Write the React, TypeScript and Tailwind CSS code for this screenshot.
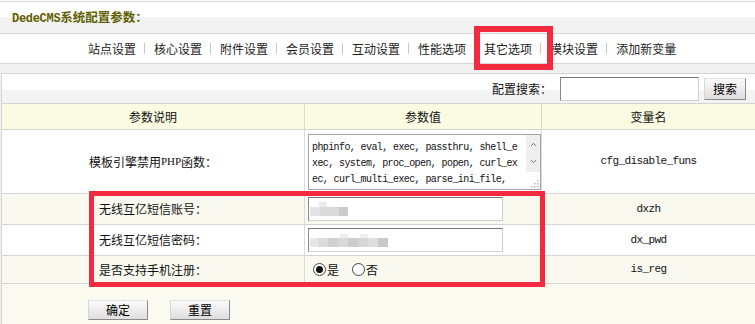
import { ChevronUp, ChevronDown } from "lucide-react";

const NAV = ["站点设置", "核心设置", "附件设置", "会员设置", "互动设置", "性能选项", "其它选项", "模块设置", "添加新变量"];
const ACTIVE = 6;

const mono = "font-['Liberation_Mono',monospace]";

function OldButton({ label, w }: { label: string; w: string }) {
  return (
    <button
      className={`${w} flex items-center justify-center border border-t-[#e4e4e4] border-l-[#d6d6d6] border-r-[#8a8a8a] border-b-[#8a8a8a] bg-[linear-gradient(to_bottom,#fbfbfb,#dedede)] text-[12px] text-black`}
    >
      {label}
    </button>
  );
}

function OldInput({ children, w }: { children?: React.ReactNode; w: string }) {
  return (
    <div className={`${w} flex h-[24px] items-center border border-t-[#777] border-l-[#8a8a8a] border-r-[#cfcfcf] border-b-[#cfcfcf] bg-white pl-px`}>
      {children}
    </div>
  );
}

function Radio({ checked }: { checked?: boolean }) {
  return (
    <span className="flex h-[13px] w-[13px] items-center justify-center rounded-full border border-[#444] bg-white">
      {checked && <span className="h-[7px] w-[7px] rounded-full bg-[#111]" />}
    </span>
  );
}

export default function App() {
  return (
    <div className="relative h-[324px] w-[755px] overflow-hidden bg-[#f0f0f0] font-['Noto_Sans_CJK_SC','Noto_Sans',sans-serif] text-[12px] leading-none text-[#111]">
      {/* title bar */}
      <div className="bg-white pt-px">
        <div className="flex h-[33px] items-center border-y border-[#d4d4d4] bg-[linear-gradient(to_bottom,#fff_50%,#f2f2f2_50%)] pl-[12px]">
          <span className="text-[12.5px] font-bold text-[#5f5f00]">
            <span className={`${mono} text-[12px] tracking-[-0.3px]`}>DedeCMS</span>系统配置参数：
          </span>
        </div>
      </div>

      {/* settings nav */}
      <div className="flex h-[30px] items-center border-b border-[#d4d4d4] bg-white pl-[88px] text-[12px] text-[#222]">
        {NAV.map((n, i) => (
          <div key={n} className="flex items-center">
            {i > 0 && (
              <span
                className={`ml-[8px] mr-[9px] h-[11px] w-px ${
                  i === ACTIVE || i === ACTIVE + 1 ? "bg-[#f0c08c]" : "bg-[#c8c8c8]"
                }`}
              />
            )}
            <span>{n}</span>
          </div>
        ))}
      </div>

      <div className="h-[9px]" />

      {/* config table */}
      <div className="ml-px border-l border-t border-[#d4d4d4] bg-[#fafaf0]">
        {/* search */}
        <div className="flex h-[30px] items-center justify-end border-b border-[#d4d4d4] bg-[linear-gradient(to_bottom,#fff_55%,#f3f3f3_55%)] pr-[9px]">
          <span className="mr-[8px]">配置搜索：</span>
          <OldInput w="w-[139px]" />
          <div className="ml-[5px] h-[22px]">
            <OldButton label="搜索" w="h-[22px] w-[42px]" />
          </div>
        </div>

        {/* header */}
        <div className="grid h-[26px] grid-cols-[303px_237px_1fr] border-b border-[#d4d4d4] bg-[#fbfbe3]">
          <div className="flex items-center justify-center border-r border-[#dcdcdc]">参数说明</div>
          <div className="flex items-center justify-center border-r border-[#dcdcdc]">参数值</div>
          <div className="flex items-center justify-center">变量名</div>
        </div>

        {/* row 1 */}
        <div className="grid h-[64px] grid-cols-[303px_237px_1fr] border-b border-[#d4d4d4] bg-white">
          <div className="flex items-center justify-center border-r border-[#dcdcdc]">
            模板引擎禁用<span className="font-['Liberation_Serif',serif] text-[11px]">PHP</span>函数：
          </div>
          <div className="flex items-center border-r border-[#dcdcdc] pl-[3px]">
            <div className="flex h-[56px] w-[233px] border border-[#a4a4a4] bg-white">
              <div className={`${mono} flex-1 pl-[3px] pt-[5px] text-[10px] leading-[16px] tracking-[-0.6px] text-[#111]`}>
                <div>phpinfo, eval, exec, passthru, shell_e</div>
                <div>xec, system, proc_open, popen, curl_ex</div>
                <div>ec, curl_multi_exec, parse_ini_file,</div>
              </div>
              <div className="flex w-[14px] flex-col">
                <div className="flex h-[37px] flex-col items-center justify-center gap-[8px] bg-[#efefef] text-[#666]">
                  <ChevronUp size={9} strokeWidth={2.5} />
                  <ChevronDown size={9} strokeWidth={2.5} />
                </div>
                <div className="flex flex-1 items-end justify-end p-px">
                  <svg width="8" height="8" viewBox="0 0 8 8" fill="#b8b8b8">
                    <rect x="6" y="0" width="1.5" height="1.5" />
                    <rect x="3" y="3" width="1.5" height="1.5" />
                    <rect x="6" y="3" width="1.5" height="1.5" />
                    <rect x="0" y="6" width="1.5" height="1.5" />
                    <rect x="3" y="6" width="1.5" height="1.5" />
                    <rect x="6" y="6" width="1.5" height="1.5" />
                  </svg>
                </div>
              </div>
            </div>
          </div>
          <div className={`${mono} flex items-center justify-center text-[11px] tracking-[-0.6px]`}>cfg_disable_funs</div>
        </div>

        {/* row 2 */}
        <div className="grid h-[31px] grid-cols-[303px_237px_1fr] border-b border-[#d4d4d4] bg-[#f9f9ef]">
          <div className="flex items-center justify-center border-r border-[#dcdcdc]">无线互亿短信账号：</div>
          <div className="flex items-center border-r border-[#dcdcdc] pl-[3px]">
            <OldInput w="w-[195px]">
              <div className="flex flex-col">
                <div className="ml-[9px] h-[5px] w-[8px] bg-[#ececec]" />
                <div className="flex h-[9px]">
                  <span className="w-[10px] bg-[#e4e4e4]" />
                  <span className="w-[10px] bg-[#dadada]" />
                  <span className="w-[9px] bg-[#d9d9d9]" />
                  <span className="w-[9px] bg-[#cbcbcb]" />
                </div>
              </div>
            </OldInput>
          </div>
          <div className={`${mono} flex items-center justify-center text-[11px] tracking-[-0.6px]`}>dxzh</div>
        </div>

        {/* row 3 */}
        <div className="grid h-[31px] grid-cols-[303px_237px_1fr] border-b border-[#d4d4d4] bg-white">
          <div className="flex items-center justify-center border-r border-[#dcdcdc]">无线互亿短信密码：</div>
          <div className="flex items-center border-r border-[#dcdcdc] pl-[3px]">
            <OldInput w="w-[195px]">
              <div className="flex flex-col">
                <div className="flex h-[4px]">
                  <span className="ml-[30px] w-[8px] bg-[#eeeeee]" />
                  <span className="ml-[12px] w-[8px] bg-[#efefef]" />
                </div>
                <div className="flex h-[9px]">
                  <span className="w-[8px] bg-[#e6e6e6]" />
                  <span className="w-[10px] bg-[#dcdcdc]" />
                  <span className="w-[10px] bg-[#d0d0d0]" />
                  <span className="w-[10px] bg-[#d8d8d8]" />
                  <span className="w-[10px] bg-[#cdcdcd]" />
                  <span className="w-[10px] bg-[#d6d6d6]" />
                  <span className="w-[10px] bg-[#dedede]" />
                  <span className="w-[10px] bg-[#c9c9c9]" />
                </div>
              </div>
            </OldInput>
          </div>
          <div className={`${mono} flex items-center justify-center text-[11px] tracking-[-0.6px]`}>dx_pwd</div>
        </div>

        {/* row 4 */}
        <div className="grid h-[28px] grid-cols-[303px_237px_1fr] border-b border-[#d4d4d4] bg-[#f9f9ef]">
          <div className="flex items-center justify-center border-r border-[#dcdcdc]">是否支持手机注册：</div>
          <div className="flex items-center border-r border-[#dcdcdc] pl-[8px]">
            <Radio checked />
            <span className="ml-px">是</span>
            <span className="ml-[13px]">
              <Radio />
            </span>
            <span className="ml-px">否</span>
          </div>
          <div className={`${mono} flex items-center justify-center text-[11px] tracking-[-0.6px]`}>is_reg</div>
        </div>

        {/* actions */}
        <div className="flex h-[41px] gap-[22px] pl-[86px] pt-[16px]">
          <OldButton label="确定" w="h-[20px] w-[60px]" />
          <OldButton label="重置" w="h-[20px] w-[60px]" />
        </div>
      </div>

      {/* red annotation boxes */}
      <div className="absolute left-[474px] top-[26px] h-[44px] w-[79px] border-[6px] border-[#f42a41]" />
      <div className="absolute left-[89px] top-[191px] h-[96px] w-[456px] border-[5px] border-[#f42a41]" />
    </div>
  );
}
